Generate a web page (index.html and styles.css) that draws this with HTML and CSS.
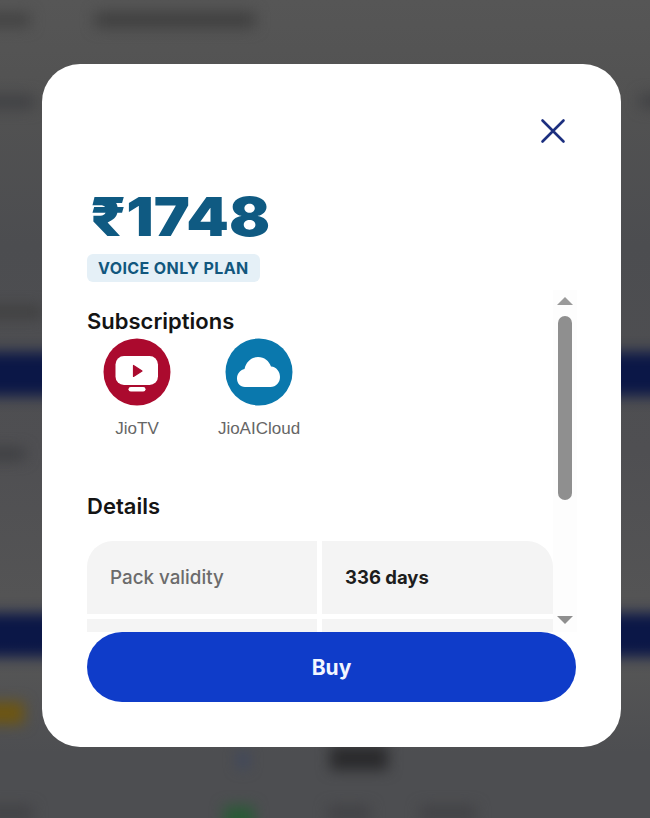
FILE: index.html
```html
<!DOCTYPE html>
<html lang="en">
<head>
<meta charset="utf-8">
<title>Plan details</title>
<link rel="stylesheet" href="styles.css">
</head>
<body>
<div class="backdrop" aria-hidden="true">
  <div class="blob blob-title"></div>
  <div class="blob blob-title-left"></div>
  <div class="blob blob-left-a"></div>
  <div class="blob blob-left-b"></div>
  <div class="blob blob-left-c"></div>
  <div class="band band-one"></div>
  <div class="band band-two"></div>
  <div class="blob blob-gold"></div>
  <div class="blob blob-price"></div>
  <div class="blob blob-green"></div>
  <div class="blob blob-blue"></div>
  <div class="blob blob-foot-a"></div>
  <div class="blob blob-foot-b"></div>
  <div class="blob blob-foot-c"></div>
  <div class="blob blob-right"></div>
</div>

<div class="modal">
  <div class="modal-top">
    <button class="close" aria-label="Close">
      <svg viewBox="0 0 26 26" width="26" height="26"><path d="M2.5 2.5 L23.5 23.5 M23.5 2.5 L2.5 23.5" fill="none" stroke="#1c2f7f" stroke-width="2.6" stroke-linecap="round"/></svg>
    </button>
  </div>
  <div class="price">₹1748</div>
  <div class="tag">VOICE ONLY PLAN</div>

  <div class="scroll-wrap">
    <div class="scroll-content">
      <h2 class="heading">Subscriptions</h2>
      <div class="subs">
        <div class="sub sub-tv">
          <svg class="sub-icon" viewBox="0 0 68 68" width="68" height="68">
            <circle cx="34" cy="34" r="33.5" fill="#ab0a2e"/>
            <rect x="12.500" y="18" width="42.500" height="29" rx="8.500" fill="#fff"/>
            <rect x="25.500" y="49" width="17" height="4.500" rx="2.250" fill="#fff"/>
            <path d="M30.500 27.500 V38.500 L39 33 Z" fill="#ab0a2e" stroke="#ab0a2e" stroke-width="1.200" stroke-linejoin="round"/>
          </svg>
          <span class="sub-name">JioTV</span>
        </div>
        <div class="sub sub-cloud">
          <svg class="sub-icon" viewBox="0 0 68 68" width="68" height="68">
            <circle cx="34" cy="34" r="33.500" fill="#0a78ad"/>
            <path d="M20 49 C15 49 12 45 12 40.500 C12 36 15 32 19.500 31 C21 24 26 19 33 19 C39.500 19 44 23 46 28.500 C51.500 29 55 33.500 55 39 C55 44.500 51 49 45.500 49 Z" fill="#fff"/>
          </svg>
          <span class="sub-name">JioAICloud</span>
        </div>
      </div>
      <h2 class="heading details-heading">Details</h2>
      <div class="table">
        <div class="cell cell-label cell-first">Pack validity</div>
        <div class="cell cell-value cell-last">336 days</div>
        <div class="cell"></div>
        <div class="cell"></div>
      </div>
    </div>
    <div class="scrollbar" aria-hidden="true">
      <span class="arrow-up"></span>
      <span class="thumb"></span>
      <span class="arrow-down"></span>
    </div>
  </div>

  <button class="buy">Buy</button>
</div>
</body>
</html>
```
FILE: styles.css
```css
* { box-sizing: border-box; }
html, body { margin: 0; height: 100%; }
body {
  position: relative;
  width: 650px;
  height: 818px;
  overflow: hidden;
  background: #4e4f52;
  font-family: Inter, "Liberation Sans", sans-serif;
}

/* blurred page behind the dialog */
.backdrop {
  position: absolute;
  inset: 0;
  overflow: hidden;
  background: linear-gradient(180deg, #565656 0%, #525252 12%, #4c4d50 30%, #4f4f52 55%, #565656 80%, #4d4e51 92%);
}
.blob, .band { position: absolute; filter: blur(7px); }
.band { left: -30px; right: -30px; height: 44px; background: #0b1747; }
.band-one { top: 352px; }
.band-two { top: 613px; }
.blob-title { left: 95px; top: 12px; width: 160px; height: 16px; background: #404040; }
.blob-title-left { left: -20px; top: 13px; width: 50px; height: 14px; background: #434343; }
.blob-left-a { left: -20px; top: 95px; width: 55px; height: 14px; background: #404144; }
.blob-left-b { left: -20px; top: 306px; width: 62px; height: 12px; background: #3f3f3f; }
.blob-left-c { left: -20px; top: 448px; width: 45px; height: 12px; background: #3d3e41; }
.blob-gold { left: -24px; top: 702px; width: 48px; height: 22px; background: #6e5610; }
.blob-price { left: 330px; top: 746px; width: 58px; height: 24px; background: #2a2a2c; }
.blob-green { left: 224px; top: 806px; width: 30px; height: 30px; background: #2a5a36; }
.blob-blue { left: 238px; top: 752px; width: 10px; height: 16px; background: #3c4660; }
.blob-foot-a { left: -15px; top: 806px; width: 48px; height: 14px; background: #424245; }
.blob-foot-b { left: 328px; top: 806px; width: 42px; height: 14px; background: #424245; }
.blob-foot-c { left: 420px; top: 806px; width: 56px; height: 14px; background: #424245; }
.blob-right { left: 640px; top: 94px; width: 30px; height: 14px; background: #404144; }

/* dialog */
.modal {
  position: absolute;
  left: 42px;
  top: 64px;
  width: 579px;
  height: 683px;
  padding: 0 45px;
  background: #fff;
  border-radius: 38px;
  display: flex;
  flex-direction: column;
}
.modal-top {
  height: 124px;
  display: flex;
  justify-content: flex-end;
  padding-top: 54px;
  flex: none;
}
.close {
  width: 26px;
  height: 26px;
  padding: 0;
  margin-right: 10px;
  border: 0;
  background: none;
  display: block;
}
.close svg { display: block; }
.price {
  margin-left: 3px;
  font-size: 53.500px;
  line-height: 58px;
  font-weight: 900;
  color: #0f5a82;
  white-space: nowrap;
  transform: scaleX(1.135);
  transform-origin: left center;
  flex: none;
}
.tag {
  align-self: flex-start;
  margin-top: 8px;
  height: 28px;
  padding: 0 11px;
  border-radius: 6px;
  background: #e5f0f7;
  color: #12577e;
  font-size: 16px;
  font-weight: 700;
  letter-spacing: 0.4px;
  line-height: 28px;
  white-space: nowrap;
  flex: none;
}
.scroll-wrap {
  margin-top: 8px;
  width: 491px;
  height: 342px;
  display: flex;
  overflow: hidden;
  flex: none;
}
.scroll-content {
  width: 466px;
  flex: none;
  overflow: hidden;
  padding-top: 18px;
}
.heading {
  margin: 0;
  font-size: 22px;
  line-height: 26px;
  font-weight: 600;
  color: #141414;
}
.subs {
  display: flex;
  margin-top: 4px;
}
.sub {
  display: flex;
  flex-direction: column;
  align-items: center;
}
.sub-tv { width: 100px; }
.sub-cloud { width: 84px; margin-left: 30px; }
.sub-icon { display: block; flex: none; }
.sub-name {
  margin-top: 14px;
  font-family: "Liberation Sans", Arial, sans-serif;
  font-size: 17px;
  line-height: 18px;
  color: #666;
  white-space: nowrap;
}
.details-heading { margin-top: 55px; }
.table {
  margin-top: 22px;
  display: grid;
  grid-template-columns: 230px 231px;
  gap: 5px;
  grid-auto-rows: 73px;
}
.cell {
  background: #f4f4f4;
  padding-left: 23px;
  display: flex;
  align-items: center;
  font-size: 18.800px;
}
.cell-first { border-top-left-radius: 26px; }
.cell-last { border-top-right-radius: 26px; }
.cell-label { color: #6b6b6b; font-weight: 500; }
.cell-value { color: #1d1d1d; font-weight: 700; font-size: 18.500px; padding-bottom: 1px; }
.scrollbar {
  width: 24px;
  flex: none;
  background: #fdfdfd;
  display: flex;
  flex-direction: column;
  align-items: center;
  padding-top: 7px;
  padding-right: 1px;
}
.arrow-up, .arrow-down {
  width: 0;
  height: 0;
  border-left: 8px solid transparent;
  border-right: 8px solid transparent;
  flex: none;
}
.arrow-up { border-bottom: 8px solid #9a9a9a; }
.arrow-down { border-top: 8px solid #8f8f8f; margin-top: 116px; }
.thumb {
  width: 14px;
  height: 184px;
  margin-top: 11px;
  background: #8f8f8f;
  border-radius: 7px;
  flex: none;
}
.buy {
  width: 489px;
  height: 70px;
  border: 0;
  border-radius: 35px;
  background: #0f3cc9;
  color: #f2f6ff;
  font-family: Inter, "Liberation Sans", sans-serif;
  font-size: 21px;
  font-weight: 700;
  flex: none;
}
```
